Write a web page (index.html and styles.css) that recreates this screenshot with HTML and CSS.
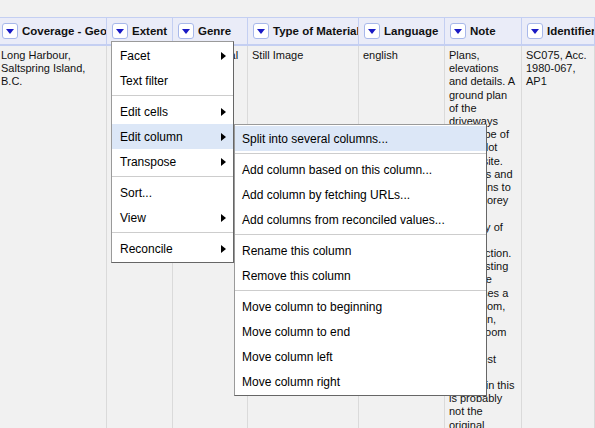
FILE: index.html
```html
<!DOCTYPE html>
<html>
<head>
<meta charset="utf-8">
<title>Data table</title>
<link rel="stylesheet" href="styles.css">
</head>
<body>
<div class="page">
  <div class="table">
    <div class="th"><span class="dd"><span class="tri"></span></span><span class="label">Coverage - Geographic</span></div>
    <div class="th"><span class="dd"><span class="tri"></span></span><span class="label">Extent</span></div>
    <div class="th"><span class="dd"><span class="tri"></span></span><span class="label">Genre</span></div>
    <div class="th"><span class="dd"><span class="tri"></span></span><span class="label">Type of Material</span></div>
    <div class="th"><span class="dd"><span class="tri"></span></span><span class="label">Language</span></div>
    <div class="th"><span class="dd"><span class="tri"></span></span><span class="label">Note</span></div>
    <div class="th"><span class="dd"><span class="tri"></span></span><span class="label">Identifier</span></div>

    <div class="td">Long Harbour, Saltspring Island, B.C.</div>
    <div class="td">1 plan</div>
    <div class="td">Architectural drawings</div>
    <div class="td">Still Image</div>
    <div class="td">english</div>
    <div class="td note">Plans,<br>elevations<br>and details. A<br>ground plan<br>of the<br>driveways<br>should be of<br>a large lot<br>on the site.<br>Sections and<br>elevations to<br>a two storey<br>house.<br>courtesy of<br>the<br>construction.<br>The existing<br>structure<br>comprises a<br>living room,<br>a kitchen,<br>dining room<br>and<br>two guest<br>rooms.<br>Shown in this<br>is probably<br>not the<br>original</div>
    <div class="td">SC075, Acc.<br>1980-067,<br>AP1</div>
  </div>

  <div class="menu main-menu">
    <div class="item"><span>Facet</span><span class="arrow"></span></div>
    <div class="item"><span>Text filter</span></div>
    <div class="sep"></div>
    <div class="item"><span>Edit cells</span><span class="arrow"></span></div>
    <div class="item active"><span>Edit column</span><span class="arrow"></span></div>
    <div class="item"><span>Transpose</span><span class="arrow"></span></div>
    <div class="sep"></div>
    <div class="item"><span>Sort...</span></div>
    <div class="item"><span>View</span><span class="arrow"></span></div>
    <div class="sep"></div>
    <div class="item"><span>Reconcile</span><span class="arrow"></span></div>
  </div>

  <div class="menu sub-menu">
    <div class="item active"><span>Split into several columns...</span></div>
    <div class="sep"></div>
    <div class="item"><span>Add column based on this column...</span></div>
    <div class="item"><span>Add column by fetching URLs...</span></div>
    <div class="item"><span>Add columns from reconciled values...</span></div>
    <div class="sep"></div>
    <div class="item"><span>Rename this column</span></div>
    <div class="item"><span>Remove this column</span></div>
    <div class="sep"></div>
    <div class="item"><span>Move column to beginning</span></div>
    <div class="item"><span>Move column to end</span></div>
    <div class="item"><span>Move column left</span></div>
    <div class="item"><span>Move column right</span></div>
  </div>
</div>
</body>
</html>
```

FILE: styles.css
```css
html, body {
  margin: 0;
  padding: 0;
  width: 595px;
  height: 428px;
  overflow: hidden;
  background: #f1f1f1;
  font-family: "Liberation Sans", Arial, sans-serif;
  color: #111;
}

.page {
  position: relative;
  padding-top: 17px;
  height: 411px;
  overflow: hidden;
}

.table {
  display: grid;
  grid-template-columns: 110px 66px 75px 111px 86px 77px minmax(0, 1fr);
  grid-template-rows: 29px 382px;
  margin-left: -3px;
  width: 598px;
}

.th {
  display: flex;
  align-items: center;
  gap: 4px;
  padding-left: 5px;
  background: #eaecf8;
  border-top: 1px solid #c4cff2;
  border-bottom: 2px solid #c4cff2;
  border-right: 1px solid #c4cff2;
  overflow: hidden;
  white-space: nowrap;
}

.dd {
  flex: none;
  box-sizing: border-box;
  width: 16px;
  height: 16px;
  background: #fff;
  border: 1px solid #a8b8ea;
  border-radius: 3px;
  display: flex;
  align-items: center;
  justify-content: center;
}

.tri {
  width: 0;
  height: 0;
  border-left: 4px solid transparent;
  border-right: 4px solid transparent;
  border-top: 5px solid #1a1ac4;
  margin-top: 1px;
}

.label {
  font-weight: bold;
  font-size: 11.5px;
  color: #111;
}

.td {
  padding: 3px 4px;
  font-size: 11px;
  line-height: 13.2px;
  border-right: 1px solid #dadada;
  background: #f1f1f1;
  overflow: hidden;
}

.note {
  white-space: nowrap;
}

.menu {
  position: absolute;
  background: #fff;
  border: 1px solid #9a9a9a;
  border-right-color: #666;
  border-bottom-color: #666;
  padding: 1px 0;
  font-size: 12px;
  color: #000;
}

.main-menu {
  left: 111px;
  top: 41px;
  width: 121px;
}

.sub-menu {
  left: 234px;
  top: 124px;
  width: 251px;
}

.item {
  display: flex;
  align-items: center;
  justify-content: space-between;
  height: 25px;
  padding: 0 7px 0 8px;
  white-space: nowrap;
}

.sub-menu .item {
  padding-left: 7px;
}

.item.active {
  background: #dce7f7;
}

.arrow {
  width: 0;
  height: 0;
  border-top: 4.5px solid transparent;
  border-bottom: 4.5px solid transparent;
  border-left: 5px solid #000;
}

.sep {
  height: 1px;
  margin: 2px 0 3px;
  background: #cdcdcd;
}
```
